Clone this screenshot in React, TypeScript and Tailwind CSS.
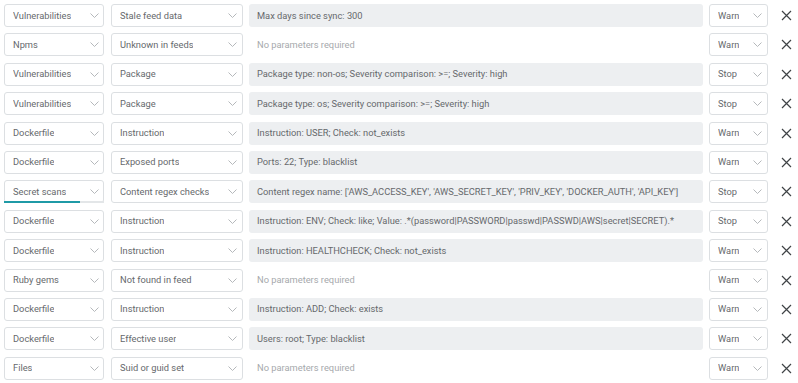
type Row = {
  gate: string
  trigger: string
  params: string | null
  action: string
  loading?: boolean
}

const rows: Row[] = [
  { gate: 'Vulnerabilities', trigger: 'Stale feed data', params: 'Max days since sync: 300', action: 'Warn' },
  { gate: 'Npms', trigger: 'Unknown in feeds', params: null, action: 'Warn' },
  { gate: 'Vulnerabilities', trigger: 'Package', params: 'Package type: non-os; Severity comparison: >=; Severity: high', action: 'Stop' },
  { gate: 'Vulnerabilities', trigger: 'Package', params: 'Package type: os; Severity comparison: >=; Severity: high', action: 'Stop' },
  { gate: 'Dockerfile', trigger: 'Instruction', params: 'Instruction: USER; Check: not_exists', action: 'Warn' },
  { gate: 'Dockerfile', trigger: 'Exposed ports', params: 'Ports: 22; Type: blacklist', action: 'Warn' },
  {
    gate: 'Secret scans',
    trigger: 'Content regex checks',
    params: "Content regex name: ['AWS_ACCESS_KEY', 'AWS_SECRET_KEY', 'PRIV_KEY', 'DOCKER_AUTH', 'API_KEY']",
    action: 'Stop',
    loading: true,
  },
  {
    gate: 'Dockerfile',
    trigger: 'Instruction',
    params: 'Instruction: ENV; Check: like; Value: .*(password|PASSWORD|passwd|PASSWD|AWS|secret|SECRET).*',
    action: 'Stop',
  },
  { gate: 'Dockerfile', trigger: 'Instruction', params: 'Instruction: HEALTHCHECK; Check: not_exists', action: 'Warn' },
  { gate: 'Ruby gems', trigger: 'Not found in feed', params: null, action: 'Warn' },
  { gate: 'Dockerfile', trigger: 'Instruction', params: 'Instruction: ADD; Check: exists', action: 'Warn' },
  { gate: 'Dockerfile', trigger: 'Effective user', params: 'Users: root; Type: blacklist', action: 'Warn' },
  { gate: 'Files', trigger: 'Suid or guid set', params: null, action: 'Warn' },
]

function Chevron() {
  return (
    <svg width="9" height="5" viewBox="0 0 9 5" fill="none" className="shrink-0">
      <path d="M0.5 0.5L4.5 4.5L8.5 0.5" stroke="#b5b8bb" strokeWidth="1" />
    </svg>
  )
}

function Select({ value, width, pr, loading }: { value: string; width: string; pr: string; loading?: boolean }) {
  return (
    <div
      className={`relative flex h-full ${width} ${pr} shrink-0 items-center justify-between rounded-[3px] border border-[#dcdfe2] bg-white pl-2 text-[#66696c]`}
    >
      <span className="truncate">{value}</span>
      <Chevron />
      {loading && (
        <div className="absolute -bottom-px -left-px -right-px flex h-[2px] bg-[#e3e6e8]">
          <div className="h-full w-[76%] bg-[#1f9aa6]" />
        </div>
      )}
    </div>
  )
}

export default function App() {
  return (
    <div className="h-[383px] w-[798px] overflow-hidden bg-white font-['Roboto',sans-serif] text-[9.3px]">
      <div className="flex flex-col gap-[6.4px] pt-[4px]">
        {rows.map((r, i) => (
          <div key={i} className="flex h-[23px] items-center pl-[4px]">
            <Select value={r.gate} width="w-[100px]" pr="pr-[4px]" loading={r.loading} />
            <div className="ml-[7px] flex h-full shrink-0">
              <Select value={r.trigger} width="w-[132px]" pr="pr-[5px]" />
            </div>
            <div
              className={`ml-[6px] flex h-full w-[454px] shrink-0 items-center overflow-hidden whitespace-nowrap rounded-[3px] pl-2 ${
                r.params ? 'bg-[#edeff1] text-[#66696c]' : 'bg-white text-[#a6a9ac]'
              }`}
            >
              {r.params ?? 'No parameters required'}
            </div>
            <div className="ml-[6px] flex h-full shrink-0">
              <Select value={r.action} width="w-[59px]" pr="pr-[5px]" />
            </div>
            <div className="ml-[3px] flex w-[30px] shrink-0 justify-center">
              <svg width="11" height="11" viewBox="0 0 11 11">
                <path d="M1 1L10 10M10 1L1 10" stroke="#3f4346" strokeWidth="1.2" />
              </svg>
            </div>
          </div>
        ))}
      </div>
    </div>
  )
}
